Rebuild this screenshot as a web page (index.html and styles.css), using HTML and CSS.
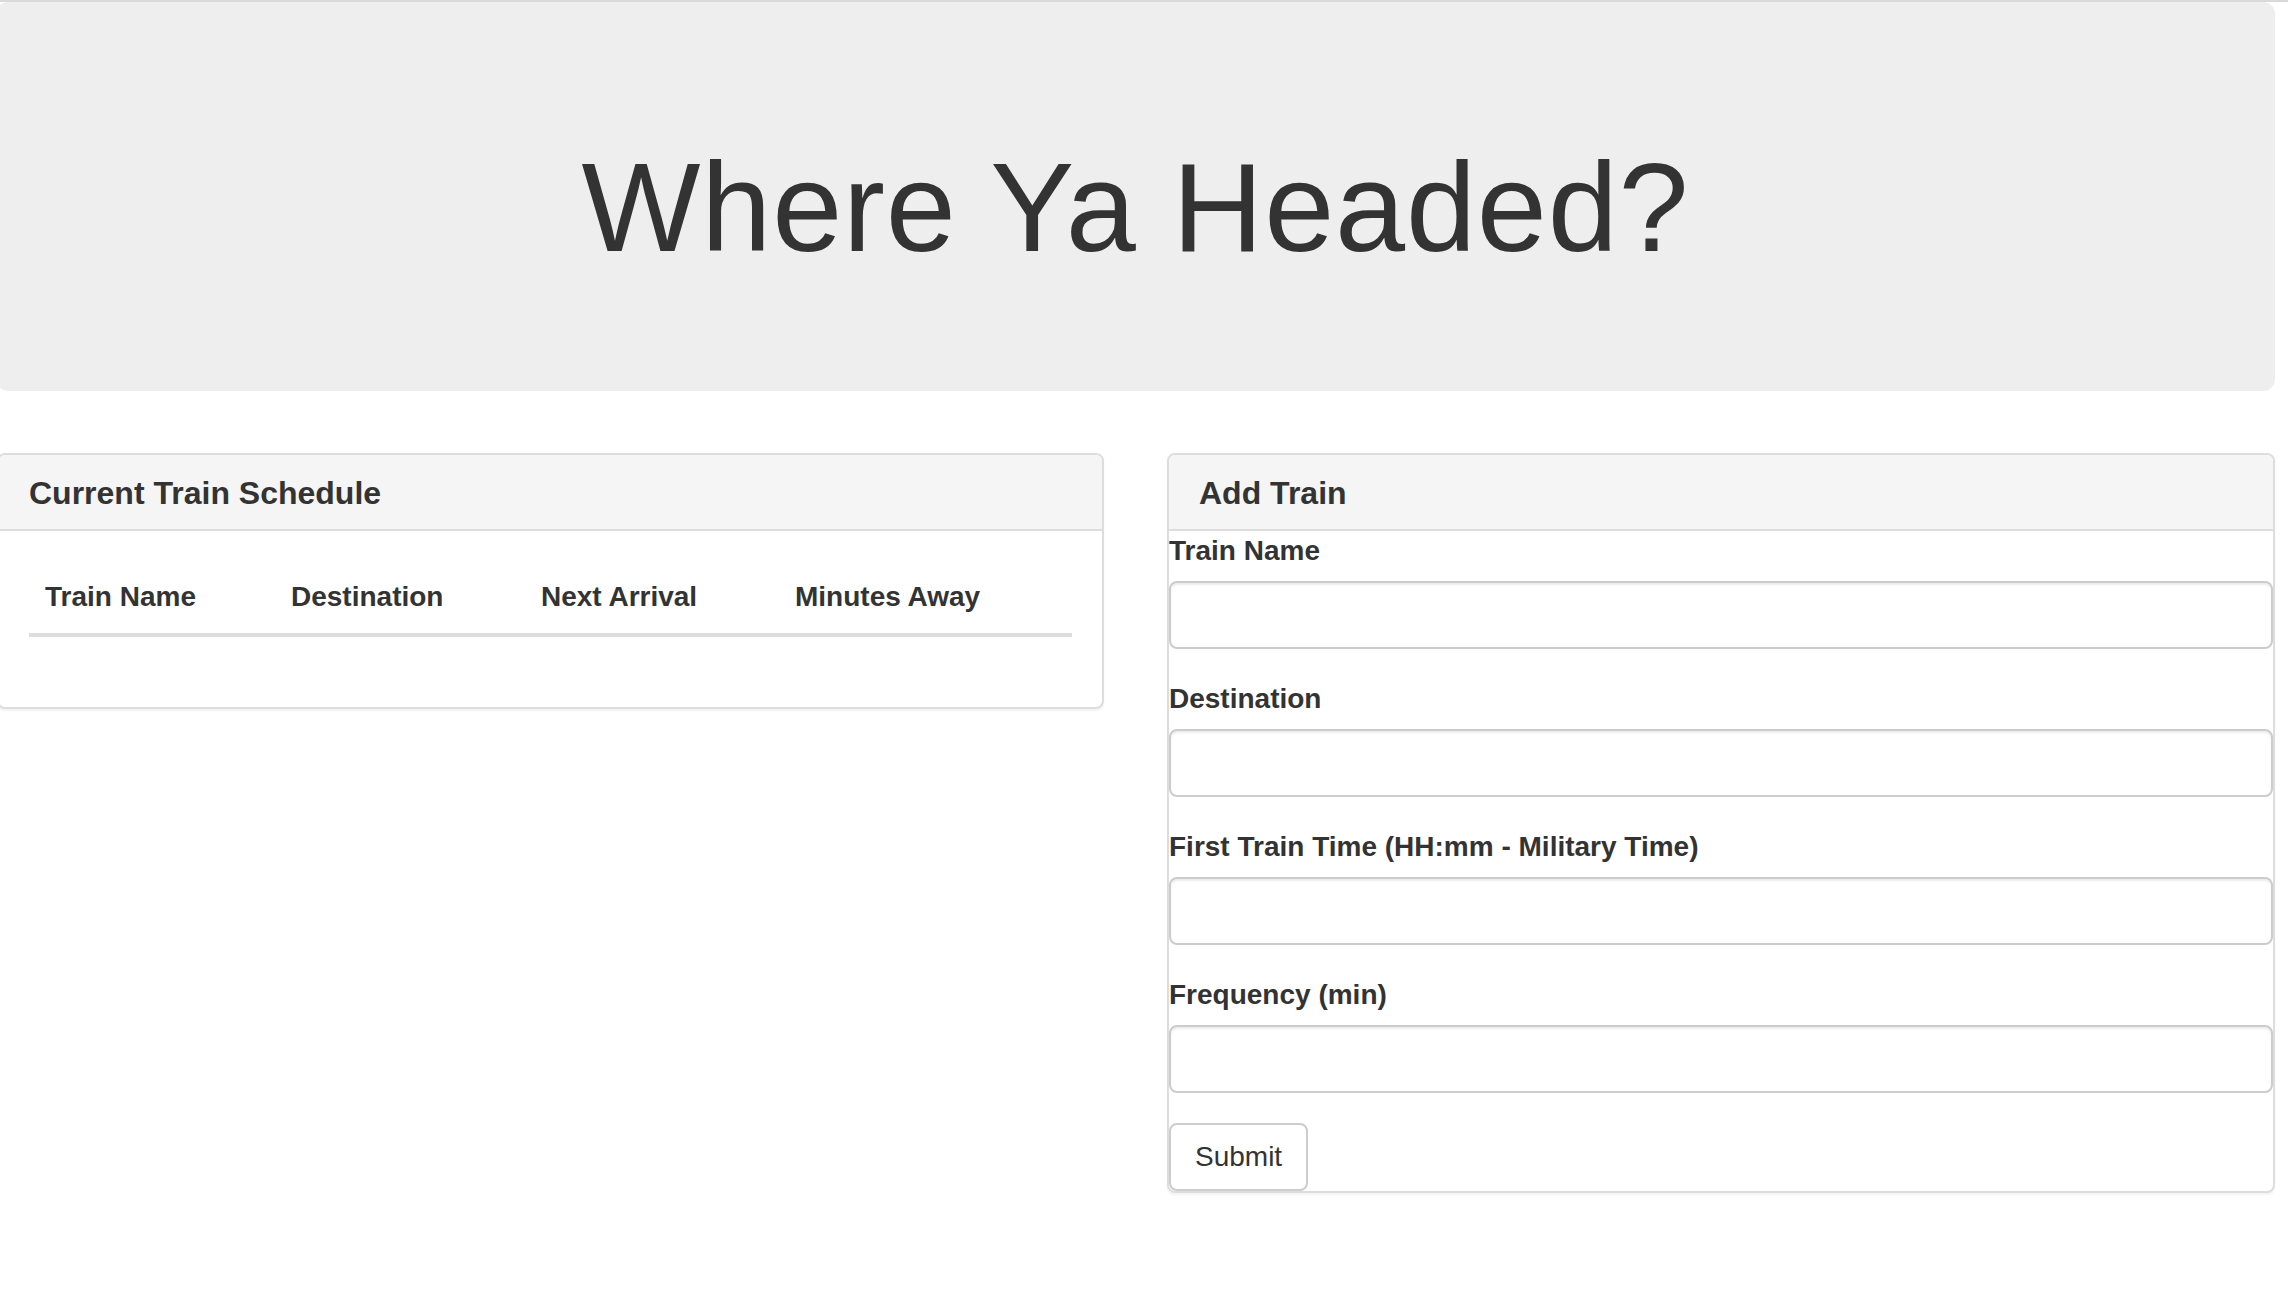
FILE: index.html
```html
<!DOCTYPE html>
<html>
<head>
<meta charset="utf-8">
<title>Train Scheduler</title>
<link rel="stylesheet" href="styles.css">
</head>
<body>
<div class="page">
  <div class="wrap">
    <div class="jumbotron">
      <h1>Where Ya Headed?</h1>
    </div>
    <div class="row">
      <div class="panel">
        <div class="panel-heading"><h3 class="panel-title">Current Train Schedule</h3></div>
        <div class="panel-body">
          <table class="table">
            <thead>
              <tr>
                <th class="c1">Train Name</th>
                <th class="c2">Destination</th>
                <th class="c3">Next Arrival</th>
                <th class="c4">Minutes Away</th>
              </tr>
            </thead>
            <tbody></tbody>
          </table>
        </div>
      </div>
      <div class="panel">
        <div class="panel-heading"><h3 class="panel-title">Add Train</h3></div>
        <form class="form">
          <div class="form-group">
            <label for="name">Train Name</label>
            <input id="name" type="text" class="form-control">
          </div>
          <div class="form-group">
            <label for="dest">Destination</label>
            <input id="dest" type="text" class="form-control">
          </div>
          <div class="form-group">
            <label for="first">First Train Time (HH:mm - Military Time)</label>
            <input id="first" type="text" class="form-control">
          </div>
          <div class="form-group">
            <label for="freq">Frequency (min)</label>
            <input id="freq" type="text" class="form-control">
          </div>
          <button type="button" class="btn">Submit</button>
        </form>
      </div>
    </div>
  </div>
</div>
</body>
</html>
```
FILE: styles.css
```css
html, body {
  margin: 0;
  padding: 0;
  background: #fff;
}
body {
  font-family: "Liberation Sans", Arial, Helvetica, sans-serif;
  color: #333;
  font-size: 28px;
  line-height: 40px;
}
.page {
  width: 2288px;
  overflow: hidden;
  border-top: 2px solid #d9d9d9;
}
.wrap {
  margin-left: -4px;
  width: 2279px;
}
.jumbotron {
  background: #eee;
  border-radius: 12px;
  padding: 95px 0 94px;
  margin-bottom: 62px;
  text-align: center;
}
.jumbotron h1 {
  font-size: 126px;
  line-height: 138px;
  font-weight: 400;
  letter-spacing: 0.8px;
  margin: 42px 0 20px;
  color: #333;
}
.row {
  display: grid;
  grid-template-columns: 1107px 1108px;
  column-gap: 63px;
  padding-left: 1px;
  align-items: start;
}
.panel {
  border: 2px solid #ddd;
  border-radius: 8px;
  background: #fff;
  box-shadow: 0 2px 2px rgba(0, 0, 0, 0.05);
  margin-bottom: 40px;
}
.panel-heading {
  background: #f5f5f5;
  padding: 21px 30px 18px;
  border-bottom: 2px solid #ddd;
  border-radius: 6px 6px 0 0;
}
.panel-title {
  margin: 0;
  font-size: 32px;
  line-height: 35px;
  font-weight: 700;
  color: #333;
}
.panel-body {
  padding: 30px;
}
.table {
  width: 100%;
  border-collapse: collapse;
  border-spacing: 0;
  margin-bottom: 40px;
  table-layout: fixed;
}
.table th {
  text-align: left;
  font-weight: 700;
  padding: 16px;
  line-height: 40px;
  border-bottom: 4px solid #ddd;
  white-space: nowrap;
}
.c1 { width: 214px; }
.c2 { width: 218px; }
.c3 { width: 222px; }
.form {
  margin: 0;
}
.form-group {
  margin-bottom: 30px;
}
.form-group label {
  display: block;
  font-weight: 700;
  margin-bottom: 10px;
  line-height: 40px;
}
.form-control {
  display: block;
  box-sizing: border-box;
  width: 100%;
  height: 68px;
  margin: 0;
  padding: 12px 24px;
  font-family: inherit;
  font-size: 28px;
  color: #555;
  background: #fff;
  border: 2px solid #ccc;
  border-radius: 8px;
  box-shadow: inset 0 2px 2px rgba(0, 0, 0, 0.075);
  outline: none;
}
.btn {
  display: block;
  box-sizing: border-box;
  height: 68px;
  margin: 0;
  padding: 12px 24px;
  font-family: inherit;
  font-size: 28px;
  line-height: 40px;
  color: #333;
  background: #fff;
  border: 2px solid #ccc;
  border-radius: 8px;
}
```
